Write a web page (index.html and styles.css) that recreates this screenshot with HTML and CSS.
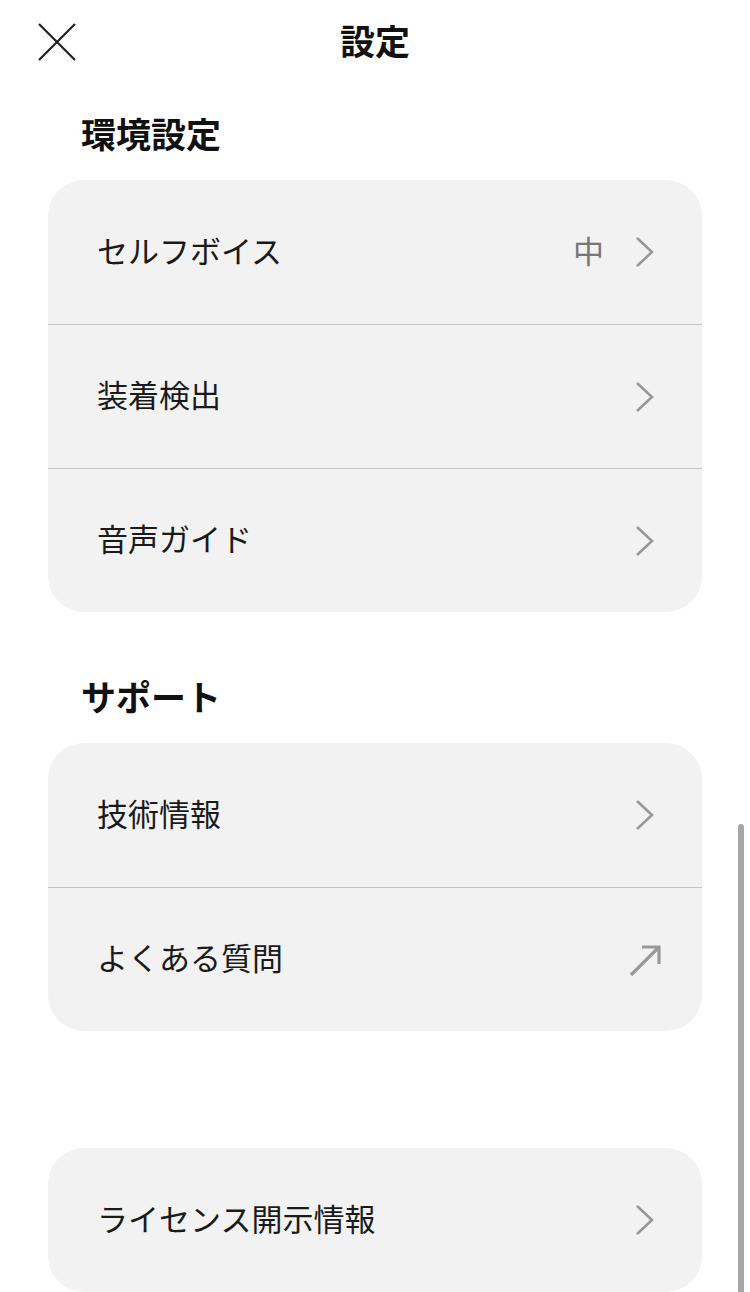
FILE: index.html
```html
<!DOCTYPE html>
<html lang="ja">
<head>
  <meta charset="UTF-8">
  <meta name="viewport" content="width=device-width, initial-scale=1.0">
  <title>設定</title>
  <link rel="stylesheet" href="styles.css">
</head>
<body>
  <header class="header">
    <button class="close-button" aria-label="閉じる">
      <svg width="38" height="38" viewBox="0 0 38 38">
        <path d="M1 1 L37 37 M37 1 L1 37" stroke="#222" stroke-width="2.2" fill="none"/>
      </svg>
    </button>
    <h1 class="title">設定</h1>
  </header>

  <section class="section">
    <h2 class="section-title">環境設定</h2>
    <div class="card">
      <div class="row">
        <span class="label">セルフボイス</span>
        <span class="value">中</span>
        <svg class="chevron" width="22" height="32" viewBox="0 0 22 32">
          <path d="M3 2 L18 16 L3 30" stroke="#999" stroke-width="2.6" fill="none"/>
        </svg>
      </div>
      <div class="row">
        <span class="label">装着検出</span>
        <svg class="chevron" width="22" height="32" viewBox="0 0 22 32">
          <path d="M3 2 L18 16 L3 30" stroke="#999" stroke-width="2.6" fill="none"/>
        </svg>
      </div>
      <div class="row">
        <span class="label">音声ガイド</span>
        <svg class="chevron" width="22" height="32" viewBox="0 0 22 32">
          <path d="M3 2 L18 16 L3 30" stroke="#999" stroke-width="2.6" fill="none"/>
        </svg>
      </div>
    </div>
  </section>

  <section class="section">
    <h2 class="section-title">サポート</h2>
    <div class="card">
      <div class="row">
        <span class="label">技術情報</span>
        <svg class="chevron" width="22" height="32" viewBox="0 0 22 32">
          <path d="M3 2 L18 16 L3 30" stroke="#999" stroke-width="2.6" fill="none"/>
        </svg>
      </div>
      <div class="row">
        <span class="label">よくある質問</span>
        <svg class="external" width="34" height="34" viewBox="0 0 34 34">
          <path d="M2 32 L30 4 M13 4 L30 4 L30 21" stroke="#999" stroke-width="3.2" fill="none"/>
        </svg>
      </div>
    </div>
  </section>

  <section class="section section-bottom">
    <div class="card">
      <div class="row">
        <span class="label">ライセンス開示情報</span>
        <svg class="chevron" width="22" height="32" viewBox="0 0 22 32">
          <path d="M3 2 L18 16 L3 30" stroke="#999" stroke-width="2.6" fill="none"/>
        </svg>
      </div>
    </div>
  </section>

  <div class="scrollbar"></div>
</body>
</html>
```

FILE: styles.css
```css
body {
  font-family: "Noto Sans CJK JP", "Noto Sans", sans-serif;
  margin: 0;
  padding: 0;
  background-color: #fff;
  color: #111;
  height: 1292px;
  overflow: hidden;
  position: relative;
}
.header {
  height: 80px;
  display: flex;
  align-items: center;
  justify-content: center;
  position: relative;
}
.close-button {
  position: absolute;
  left: 38px;
  top: 23px;
  padding: 0;
  border: none;
  background: none;
  line-height: 0;
}
.title {
  margin: 0;
  font-size: 35px;
  font-weight: 700;
  line-height: 80px;
}
.section {
  padding: 0 48px;
}
.section-title {
  margin: 29px 0 23px 33px;
  font-size: 35px;
  font-weight: 700;
  line-height: 48px;
}
.section + .section .section-title {
  margin-top: 60px;
}
.section-bottom {
  margin-top: 117px;
}
.card {
  background-color: #f2f2f2;
  border-radius: 36px;
  overflow: hidden;
}
.row {
  height: 144px;
  display: flex;
  align-items: center;
  padding: 0 46px 0 49px;
  border-top: 1px solid #c4c4c4;
  box-sizing: border-box;
}
.row:first-child {
  border-top: none;
}
.label {
  flex: 1;
  font-size: 31px;
  font-weight: 400;
  color: #1a1a1a;
  margin-bottom: 6px;
}
.value {
  font-size: 31px;
  color: #777;
  margin-right: 30px;
  margin-bottom: 6px;
}
.chevron {
  display: block;
}
.external {
  display: block;
  margin-right: -7px;
}
.scrollbar {
  position: absolute;
  right: 6px;
  top: 824px;
  width: 6px;
  height: 470px;
  border-radius: 3px;
  background-color: #a6a6a6;
}
```
